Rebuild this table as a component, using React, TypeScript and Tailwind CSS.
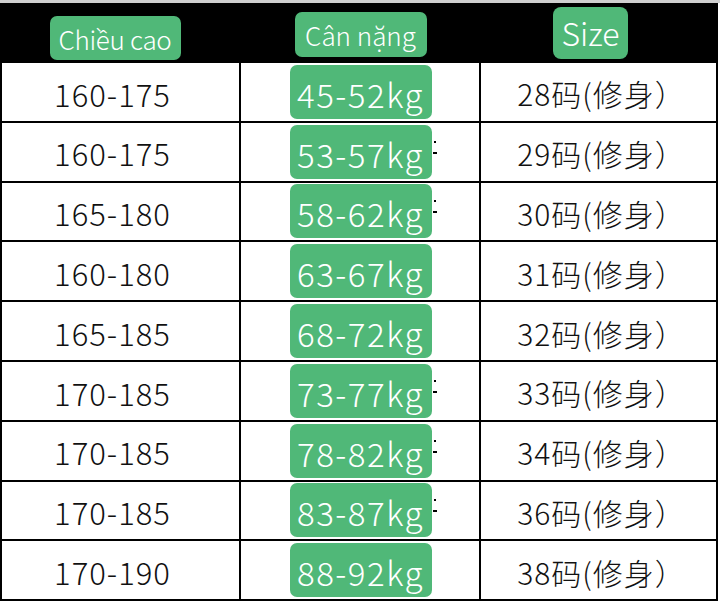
const rows = [
  { h: "160-175", w: "45-52kg", s: "28", mark: false },
  { h: "160-175", w: "53-57kg", s: "29", mark: true },
  { h: "165-180", w: "58-62kg", s: "30", mark: true },
  { h: "160-180", w: "63-67kg", s: "31", mark: false },
  { h: "165-185", w: "68-72kg", s: "32", mark: false },
  { h: "170-185", w: "73-77kg", s: "33", mark: true },
  { h: "170-185", w: "78-82kg", s: "34", mark: true },
  { h: "170-185", w: "83-87kg", s: "36", mark: true },
  { h: "170-190", w: "88-92kg", s: "38", mark: false },
];

const font = { fontFamily: '"Noto Sans CJK SC", "Noto Sans", sans-serif' };

export default function App() {
  return (
    <div className="w-[720px] h-[608px] bg-white overflow-hidden font-light" style={font}>
      <div className="h-[3px] bg-[#cfcfcf]" />
      {/* Header */}
      <div className="h-[60px] w-[718px] bg-black flex">
        <div className="w-[241px] flex justify-center">
          <div className="mt-[13px] ml-[-11px] h-[44px] w-[131px] rounded-[7px] bg-[#50b878] text-white text-[26px] leading-[46px] text-center tracking-[-0.3px]">
            Chiều cao
          </div>
        </div>
        <div className="w-[240px] flex justify-center">
          <div className="mt-[9px] ml-[-1px] h-[45px] w-[132px] rounded-[7px] bg-[#50b878] text-white text-[26px] leading-[45px] text-center">
            Cân nặng
          </div>
        </div>
        <div className="flex-1 flex justify-center">
          <div className="mt-[4px] ml-[-18px] h-[52px] w-[75px] rounded-[8px] bg-[#50b878] text-white text-[32px] leading-[50px] text-center">
            Size
          </div>
        </div>
      </div>
      {/* Body */}
      <div className="w-[718px] border-l-2 border-black">
        {rows.map((r, i) => (
          <div key={i} className="h-[59.8px] flex border-b-2 border-black">
            <div className="w-[239px] border-r-2 border-black flex items-center justify-center text-[31px] text-[#111] pt-[4px] pr-[16px] tracking-[1px]">
              {r.h}
            </div>
            <div className="w-[240px] border-r-2 border-black flex items-center justify-center">
              <div className="relative ml-[1px] h-[54px] w-[142px] rounded-[7px] bg-[#50b878] text-white text-[33px] leading-[58px] text-center tracking-[1.5px]">
                {r.w}
                {r.mark && (
                  <>
                    <span className="absolute right-[-4px] top-[16px] h-[2px] w-[2px] bg-black" />
                    <span className="absolute right-[-5px] top-[27px] h-[2px] w-[4px] bg-black" />
                  </>
                )}
              </div>
            </div>
            <div className="flex-1 border-r-2 border-black flex items-center justify-center text-[30px] text-[#111] pt-[4px] pl-[6px] tracking-[1px]">
              {r.s}码(修身）
            </div>
          </div>
        ))}
      </div>
    </div>
  );
}
